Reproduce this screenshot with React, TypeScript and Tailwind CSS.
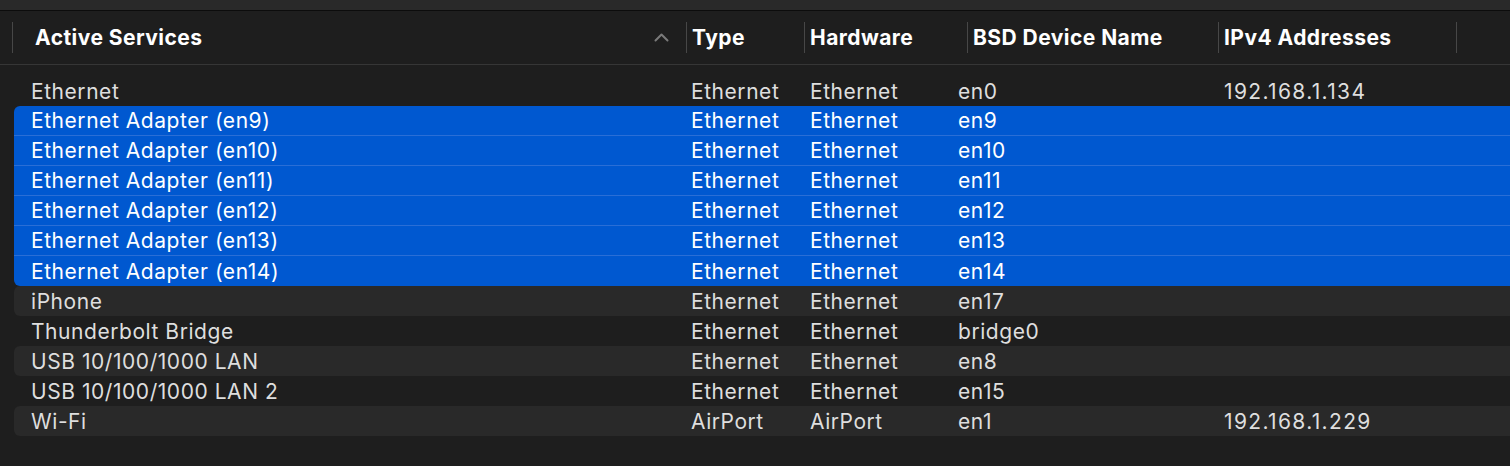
import React from 'react'

type Service = {
  name: string
  type: string
  hardware: string
  bsd: string
  ipv4?: string
  selected?: boolean
}

const services: Service[] = [
  { name: 'Ethernet', type: 'Ethernet', hardware: 'Ethernet', bsd: 'en0', ipv4: '192.168.1.134' },
  { name: 'Ethernet Adapter (en9)', type: 'Ethernet', hardware: 'Ethernet', bsd: 'en9', selected: true },
  { name: 'Ethernet Adapter (en10)', type: 'Ethernet', hardware: 'Ethernet', bsd: 'en10', selected: true },
  { name: 'Ethernet Adapter (en11)', type: 'Ethernet', hardware: 'Ethernet', bsd: 'en11', selected: true },
  { name: 'Ethernet Adapter (en12)', type: 'Ethernet', hardware: 'Ethernet', bsd: 'en12', selected: true },
  { name: 'Ethernet Adapter (en13)', type: 'Ethernet', hardware: 'Ethernet', bsd: 'en13', selected: true },
  { name: 'Ethernet Adapter (en14)', type: 'Ethernet', hardware: 'Ethernet', bsd: 'en14', selected: true },
  { name: 'iPhone', type: 'Ethernet', hardware: 'Ethernet', bsd: 'en17' },
  { name: 'Thunderbolt Bridge', type: 'Ethernet', hardware: 'Ethernet', bsd: 'bridge0' },
  { name: 'USB 10/100/1000 LAN', type: 'Ethernet', hardware: 'Ethernet', bsd: 'en8' },
  { name: 'USB 10/100/1000 LAN 2', type: 'Ethernet', hardware: 'Ethernet', bsd: 'en15' },
  { name: 'Wi-Fi', type: 'AirPort', hardware: 'AirPort', bsd: 'en1', ipv4: '192.168.1.229' },
]

function HeaderCell({
  label,
  className,
  children,
}: {
  label: string
  className: string
  children?: React.ReactNode
}) {
  return (
    <div className={`flex h-full items-center ${className}`}>
      <span className="h-[31px] w-px shrink-0 bg-[#474747]" />
      <span className="flex flex-1 items-center justify-between">{children ?? label}</span>
    </div>
  )
}

function Row({ s, index }: { s: Service; index: number }) {
  const prev = services[index - 1]
  const next = services[index + 1]
  const firstSel = s.selected && !prev?.selected
  const lastSel = s.selected && !next?.selected
  const striped = !s.selected && index % 2 === 1

  let bg = 'bg-transparent text-[#dedede]'
  if (s.selected) bg = 'bg-[#0058d0] text-white'
  else if (striped) bg = 'rounded-l-[6px] bg-[#292929] text-[#dedede]'

  const corners = `${firstSel ? 'rounded-tl-[6px]' : ''} ${lastSel ? 'rounded-bl-[6px]' : ''}`
  const sep = s.selected && !lastSel ? 'border-b border-[#2a6ed6]' : ''

  return (
    <div
      className={`ml-[14px] grid h-[30px] grid-cols-[673px_118px_153px_260px_1fr] items-center ${bg} ${corners} ${sep}`}
    >
      <span className="pl-[17px]">{s.name}</span>
      <span className="pl-[4px]">{s.type}</span>
      <span className="pl-[5px]">{s.hardware}</span>
      <span>{s.bsd}</span>
      <span className="pl-[6px] tracking-[1.35px]">{s.ipv4 ?? ''}</span>
    </div>
  )
}

export default function App() {
  return (
    <div
      className="h-[466px] w-[1510px] overflow-hidden bg-[#1e1e1e] text-[21px] leading-none tracking-[0.55px]"
      style={{ fontFamily: 'Inter, "Liberation Sans", sans-serif' }}
    >
      <div className="h-[10px] bg-[#292929]" />
      <div className="h-px bg-[#0c0c0c]" />
      <div className="flex h-[54px] border-b border-[#363636] pb-px font-bold tracking-[0.45px] text-white">
        <HeaderCell label="Active Services" className="ml-[12px] w-[674px]">
          <span className="pl-[22px]">Active Services</span>
          <svg width="15" height="9" viewBox="0 0 15 9" className="mr-[17px]">
            <polyline points="1.5,7.5 7.5,1.5 13.5,7.5" fill="none" stroke="#7a7a7a" strokeWidth="2" strokeLinecap="round" strokeLinejoin="round" />
          </svg>
        </HeaderCell>
        <HeaderCell label="Type" className="w-[118px] [&>span:last-child]:pl-[5px]" />
        <HeaderCell label="Hardware" className="w-[163px] [&>span:last-child]:pl-[5px]" />
        <HeaderCell label="BSD Device Name" className="w-[251px] [&>span:last-child]:pl-[5px]" />
        <HeaderCell label="IPv4 Addresses" className="w-[238px] [&>span:last-child]:pl-[5px]" />
        <HeaderCell label="" className="w-[20px]" />
      </div>
      <div className="pt-[11px]">
        {services.map((s, i) => (
          <Row key={s.name} s={s} index={i} />
        ))}
      </div>
    </div>
  )
}
